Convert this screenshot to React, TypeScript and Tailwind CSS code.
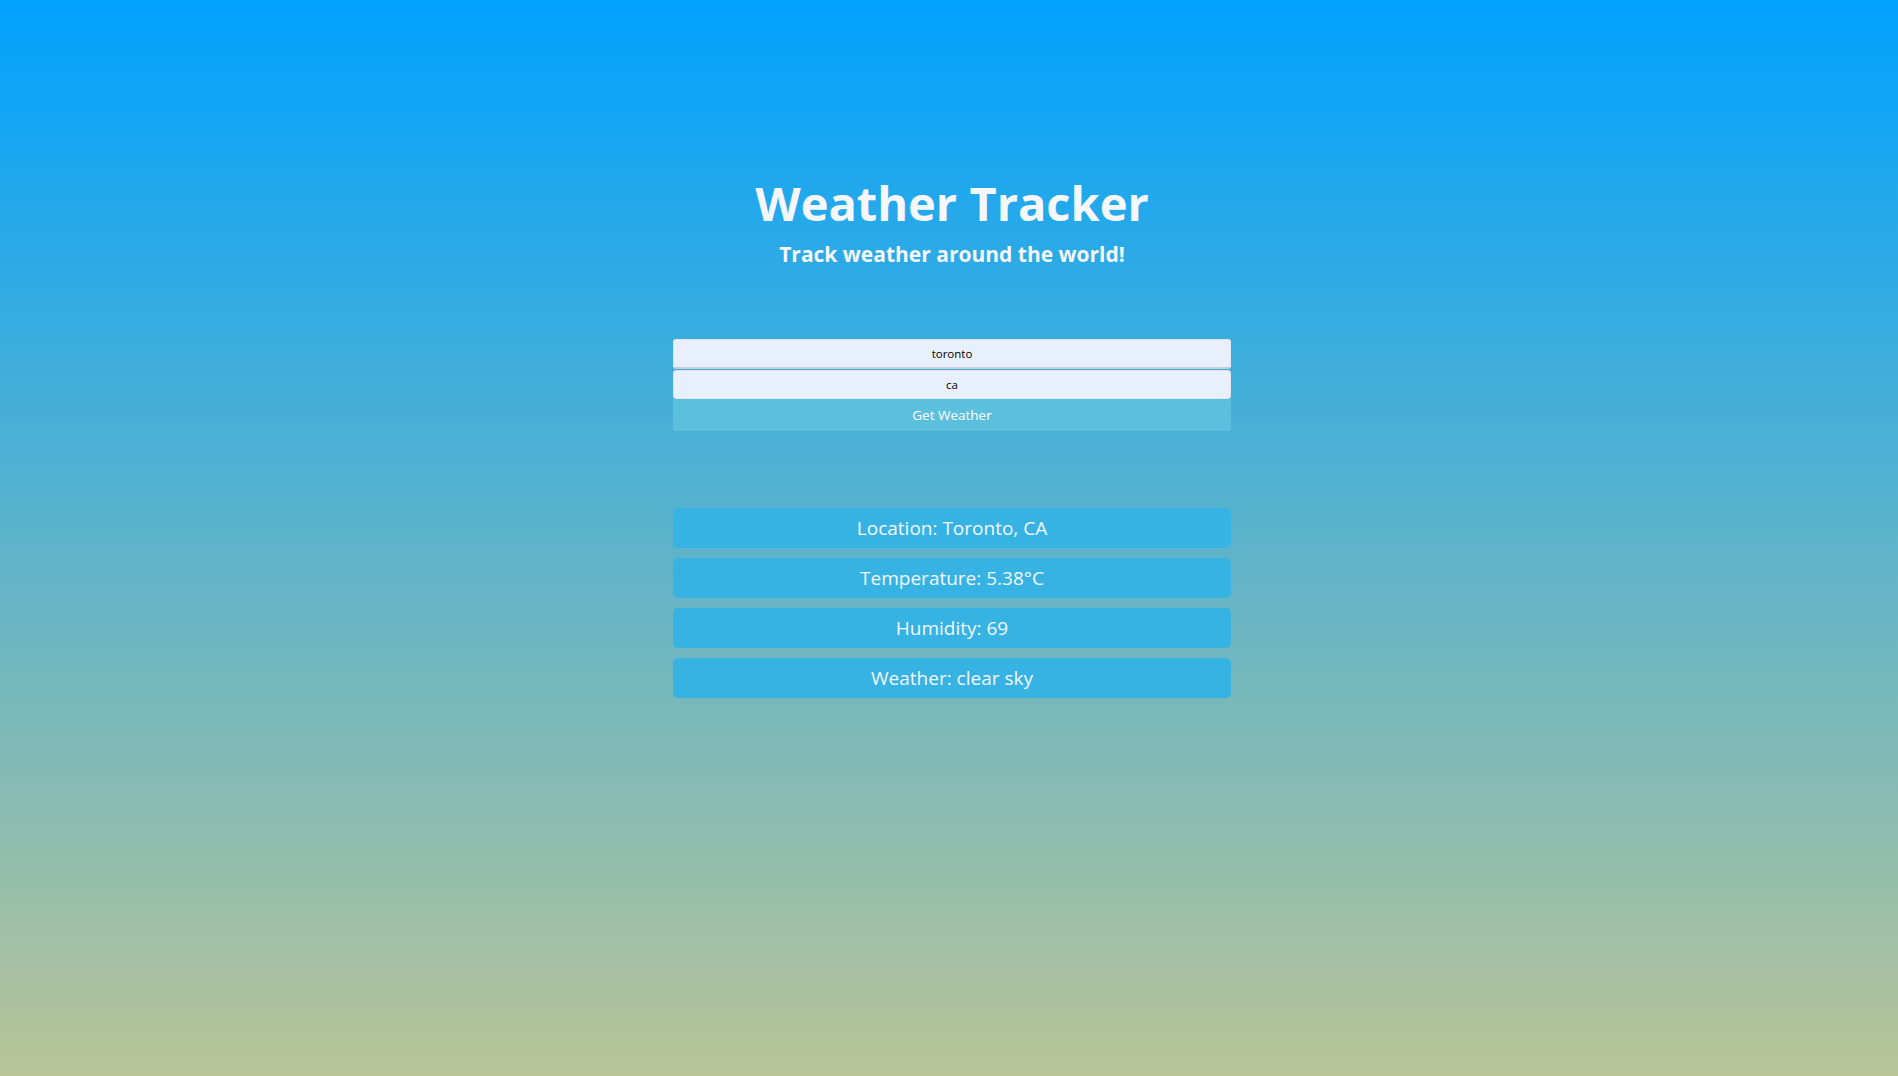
const rows = [
  "Location: Toronto, CA",
  "Temperature: 5.38°C",
  "Humidity: 69",
  "Weather: clear sky",
];

export default function App() {
  return (
    <div className="min-h-screen bg-[linear-gradient(to_bottom,#00a2ff,#b8c497)] pl-[6px] font-['Open_Sans',sans-serif]">
      <header className="pt-[180px] text-center text-[#f5f7fa]">
        <h1 className="text-[47px] font-bold leading-none">Weather Tracker</h1>
        <p className="mt-[17px] text-[21px] font-bold leading-none">
          Track weather around the world!
        </p>
      </header>

      <form
        className="mx-auto mt-[74px] flex w-[558px] flex-col"
        onSubmit={(e) => e.preventDefault()}
      >
        <input
          defaultValue="toronto"
          className="h-[30px] rounded-[3px] border border-[#dfe4ec] border-b-2 border-b-[#c8cbd0] bg-[#e8f0fe] text-center text-[11.5px] text-black outline-none"
        />
        <input
          defaultValue="ca"
          className="mt-px h-[29px] rounded-[3px] border border-[#dfe4ec] bg-[#e8f0fe] text-center text-[11.5px] text-black outline-none"
        />
        <button
          type="submit"
          className="h-[32px] rounded-b-[3px] bg-[#5bbfde] text-[13.5px] text-white"
        >
          Get Weather
        </button>
      </form>

      <div className="mx-auto mt-[77px] flex w-[558px] flex-col gap-[10px]">
        {rows.map((row) => (
          <div
            key={row}
            className="flex h-[40px] items-center justify-center rounded-[5px] bg-[#37b3e3] text-[19px] text-[#f3f7fb]"
          >
            {row}
          </div>
        ))}
      </div>
    </div>
  );
}
